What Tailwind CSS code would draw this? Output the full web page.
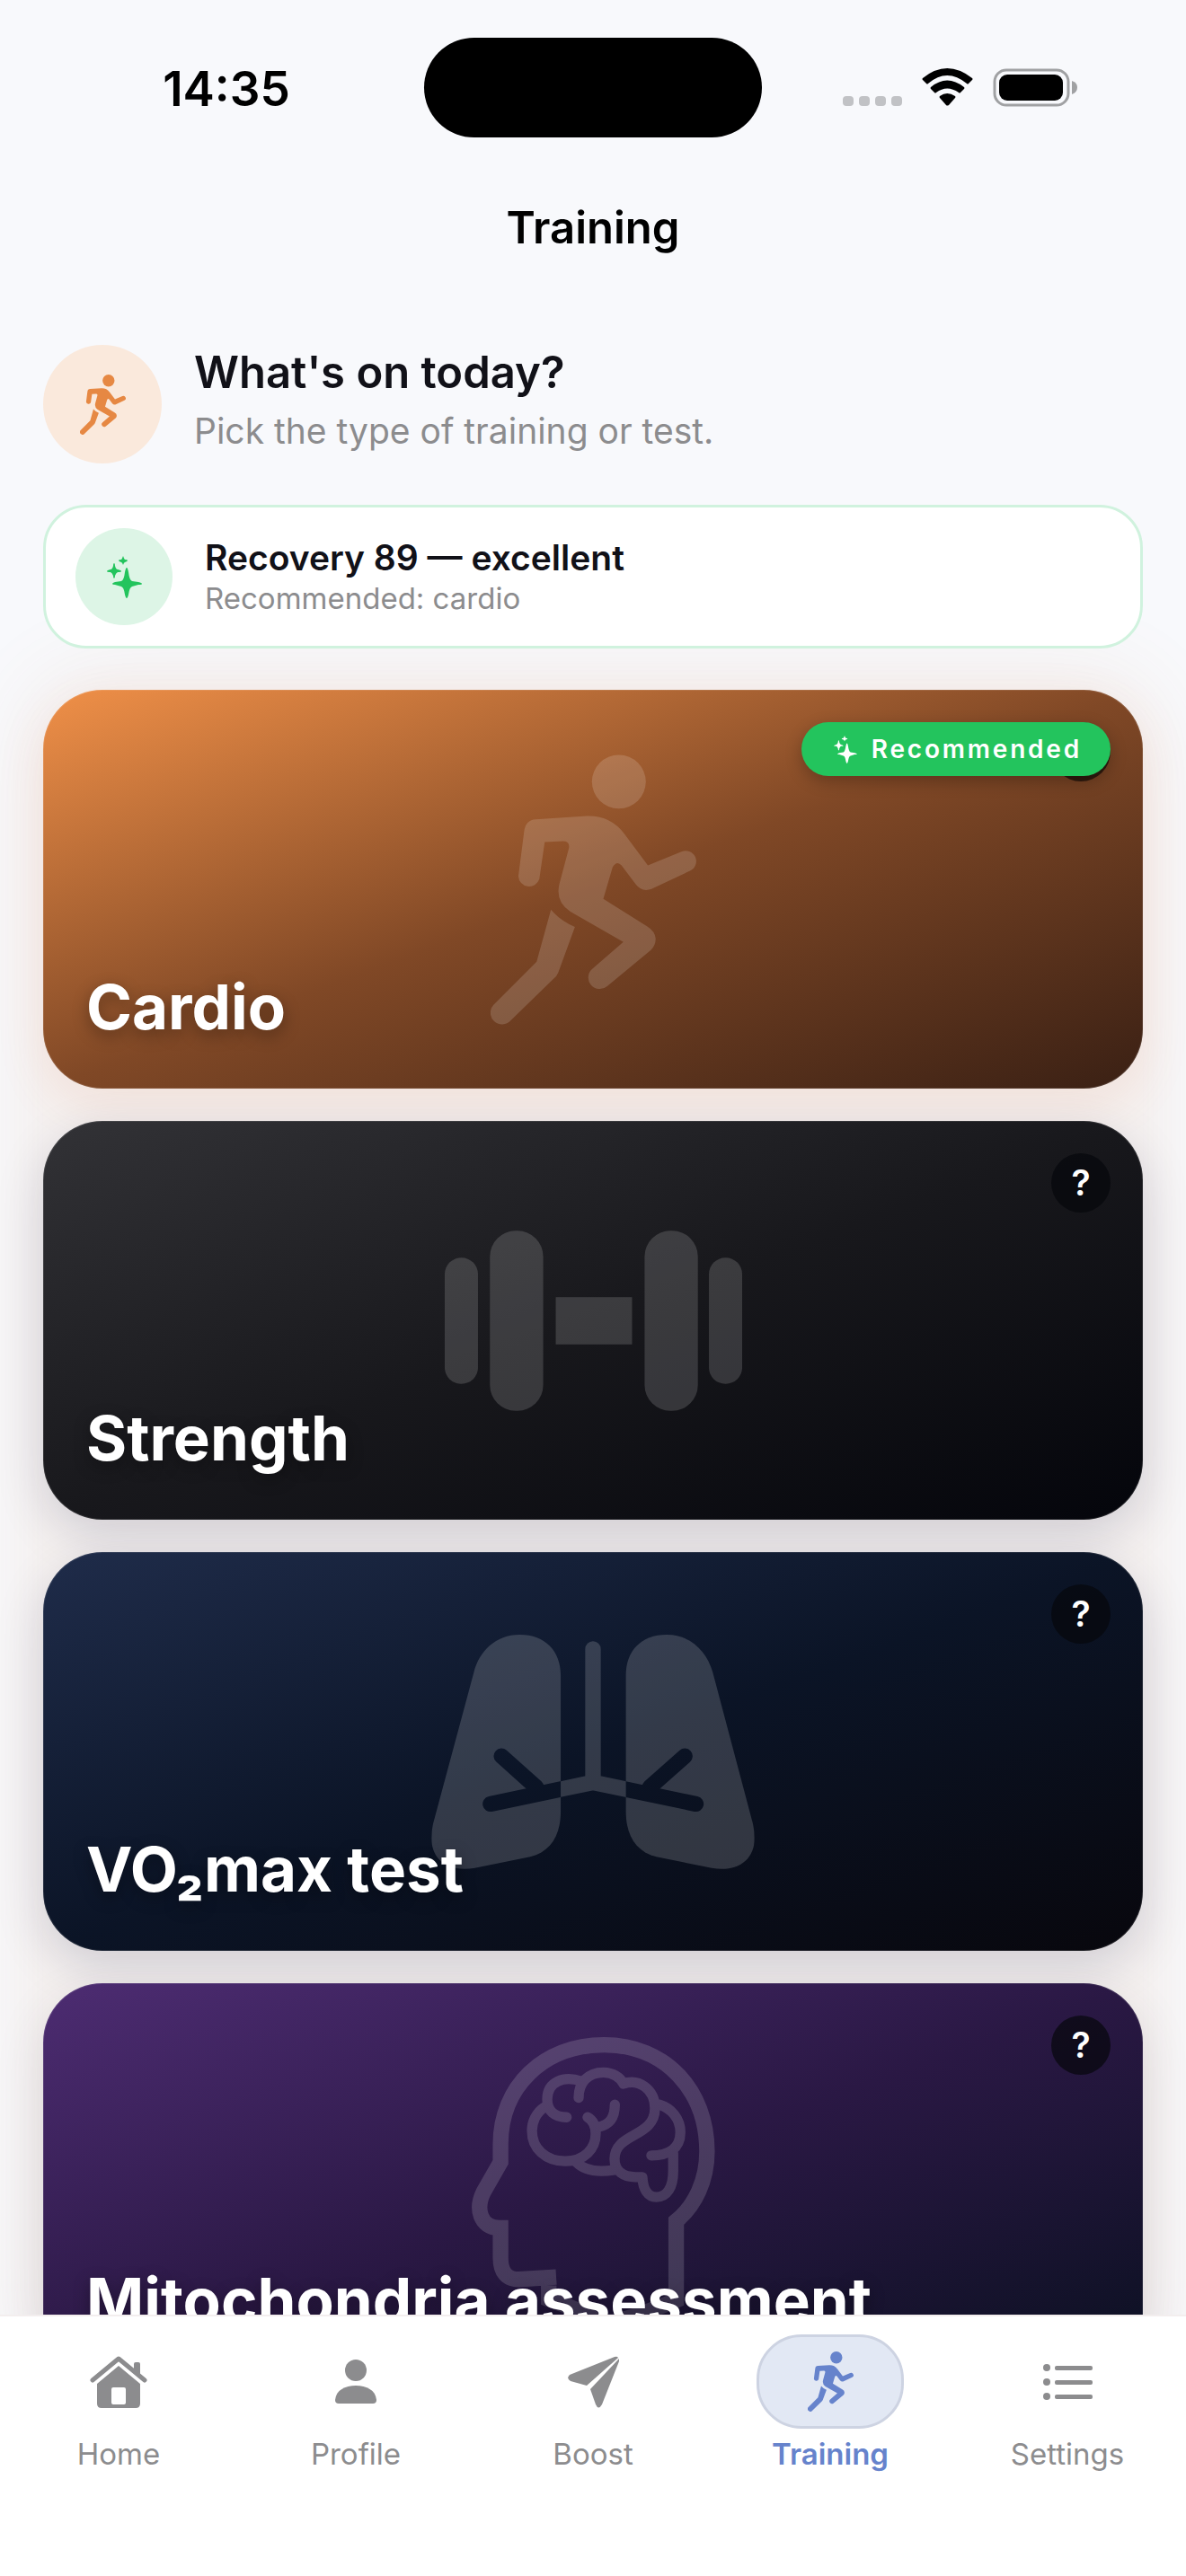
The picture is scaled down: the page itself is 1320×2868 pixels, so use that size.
<!DOCTYPE html>
<html lang="en">
<head>
    <meta charset="UTF-8">
    <meta name="viewport" content="width=device-width, initial-scale=1.0">
    <title>Training</title>
    <script src="https://cdn.jsdelivr.net/npm/@tailwindcss/browser@4"></script>
</head>
<body class="flex h-screen flex-col overflow-hidden bg-[#f8f9fc] font-['Inter','Liberation_Sans',sans-serif] text-[#111118]">

    <!-- Shared icons -->
    <svg class="hidden">
        <symbol id="runner" viewBox="198 116 688 902">
            <circle cx="627" cy="206" r="90"/>
            <path d="M350 332Q314 334 310 374L291 522A36 36 0 0 0 361 532L379 408L440 405Q464 405 460 428L428 548Q414 607 464 640L642 742L538 832A36 36 0 0 0 588 890L734 769Q750 754 750 731Q748 706 722 690L575 598L606 492Q620 468 636 486L684 550Q704 576 736 565L865 504A35 35 0 0 0 836 440L724 486L645 380Q598 318 520 321Z"/>
            <path d="M400 634Q430 670 480 692L424 845Q419 857 410 864L265 1005A38 38 0 0 1 208 952L352 808Z"/>
        </symbol>
        <symbol id="sparkles" viewBox="0 0 39 47">
            <path d="M22 13Q23 13 24 18Q25 27 28 28L35 29Q39 30 39 31Q39 32 35 32L28 34Q25 35 24 43Q23 47 22 47Q21 47 20 43Q19 35 16 34L9 32Q6 32 6 31Q6 30 9 29L16 28Q19 27 20 18Q21 13 22 13Z"/>
            <path d="M8 8Q9 8 9 11Q10 15 12 15Q16 16 16 17Q16 18 12 18Q10 19 9 22Q9 25 8 25Q7 25 7 22Q6 19 4 18Q0 18 0 17Q0 16 4 15Q6 15 7 11Q7 8 8 8Z"/>
            <path d="M18 0Q19 3 20 4Q23 4 23 5Q23 6 20 7Q19 7 18 10Q17 7 16 7Q13 6 13 5Q13 4 16 4Q17 3 18 0Z"/>
        </symbol>
    </svg>

    <!-- Status bar -->
    <header class="shrink-0 text-black">
        <div class="grid h-[194px] grid-cols-3 items-center">
            <div class="pt-1 pl-16 text-center text-[53px] leading-none font-semibold">14:35</div>
            <div class="mx-auto h-[111px] w-[376px] rounded-full bg-black"></div>
            <div class="flex items-center justify-end gap-[22px] pr-[121px]">
                <svg class="h-[42px] w-[66px]" viewBox="0 0 66 42" fill="#c1c2c5">
                    <rect x="0" y="31" width="12" height="11" rx="4"/>
                    <rect x="18" y="31" width="12" height="11" rx="4"/>
                    <rect x="36" y="31" width="12" height="11" rx="4"/>
                    <rect x="54" y="31" width="12" height="11" rx="4"/>
                </svg>
                <svg class="h-[42px] w-[57px]" viewBox="0 0 57 42">
                    <path d="M1 11Q0 12 1 13L5 17Q6 18 7 17Q28 -1 50 17Q51 18 52 17L56 13Q57 12 56 11Q28 -11 1 11Z"/>
                    <path d="M10 21Q9 22 10 23L14 27Q15 28 16 27Q28 18 41 27Q42 28 43 27L47 23Q48 22 47 21Q28 6 10 21Z"/>
                    <path d="M20 31Q19 32 20 33L27 41Q28 42 30 41L37 33Q38 32 37 31Q28 25 20 31Z"/>
                </svg>
                <svg class="h-[43px] w-[94px]" viewBox="0 0 94 43">
                    <rect x="2" y="2" width="82" height="39" rx="13" fill="none" stroke="#a0a1a3" stroke-width="3"/>
                    <rect x="7" y="7" width="71" height="29" rx="9"/>
                    <path d="M88 14Q94 16 94 21Q94 27 88 29Z" fill="#a0a1a3"/>
                </svg>
            </div>
        </div>
        <h1 class="pt-[30px] text-center text-[49px] leading-[60px] font-semibold">Training</h1>
    </header>

    <main class="flex min-h-0 flex-1 flex-col gap-[46px] overflow-hidden px-12 pt-[100px]">
        <!-- Intro -->
        <section class="flex shrink-0 items-center gap-9">
            <div class="grid size-[132px] place-items-center rounded-full bg-[#fae9dc]">
                <svg class="h-[67px] w-[51px] fill-[#e68843]"><use href="#runner"/></svg>
            </div>
            <div class="-mt-1">
                <h2 class="text-[49px] leading-[64px] font-semibold">What's on today?</h2>
                <p class="text-[39px] leading-[66px] text-[#8c8c8e]">Pick the type of training or test.</p>
            </div>
        </section>

        <!-- Recovery -->
        <section class="relative z-10 flex h-[160px] shrink-0 items-center gap-9 rounded-[48px] border-3 border-[#d0f2de] bg-white px-[33px]">
            <div class="grid size-[108px] place-items-center rounded-full bg-[#ddf5e6]">
                <svg class="h-[47px] w-[39px] fill-[#23c45d]"><use href="#sparkles"/></svg>
            </div>
            <div>
                <h2 class="text-[39px] leading-[48px] font-semibold">Recovery 89 — excellent</h2>
                <p class="text-[33px] leading-[42px] text-[#8c8c8e]">Recommended: cardio</p>
            </div>
        </section>

        <!-- Training cards -->
        <section class="flex shrink-0 flex-col gap-9 rounded-[66px] bg-[#f5f1f0] shadow-[0_0_90px_24px_rgba(200,120,70,0.09)]">
            <article class="relative flex h-[444px] shrink-0 items-end rounded-[66px] bg-linear-to-br/srgb from-[#f09048] via-[#804826] to-[#3a2014] px-12 pb-12 inset-ring inset-ring-white/10 shadow-[0_18px_54px_rgba(220,110,60,0.12)]">
                <svg class="absolute inset-0 m-auto h-[301px] w-[229px] fill-white opacity-15"><use href="#runner"/></svg>
                <button class="absolute top-9 right-9 size-[66px] rounded-full bg-black/60" aria-label="About cardio"></button>
                <span class="absolute top-9 right-9 flex h-[60px] items-center gap-4 rounded-full bg-[#23c45d] pr-8 pl-9 text-[28px] font-semibold tracking-widest text-white shadow-[0_6px_18px_rgba(0,0,0,0.25)]">
                    <svg class="h-[31px] w-[26px] fill-white"><use href="#sparkles"/></svg>
                    Recommended
                </span>
                <h2 class="relative text-[69px] leading-[86px] font-bold text-white text-shadow-[0_6px_18px_rgba(0,0,0,0.35)]">Cardio</h2>
            </article>

            <article class="relative flex h-[444px] shrink-0 items-end rounded-[66px] bg-linear-to-br/srgb from-[#323236] via-[#18181c] to-[#04050b] px-12 pb-12 inset-ring inset-ring-white/10 shadow-[0_18px_54px_rgba(20,20,60,0.16)]">
                <svg class="absolute inset-0 m-auto h-[201px] w-[331px] fill-white opacity-15" viewBox="102 121 994 602">
                    <rect x="102" y="211" width="111" height="422" rx="55"/>
                    <rect x="253" y="121" width="178" height="602" rx="86"/>
                    <rect x="473" y="343" width="255" height="158"/>
                    <rect x="770" y="121" width="178" height="602" rx="86"/>
                    <rect x="985" y="211" width="111" height="422" rx="55"/>
                </svg>
                <button class="absolute top-9 right-9 size-[66px] rounded-full bg-[#06070c]/70 text-[39px] font-semibold text-white" aria-label="About strength">?</button>
                <h2 class="relative text-[69px] leading-[86px] font-bold text-white text-shadow-[0_6px_18px_rgba(0,0,0,0.35)]">Strength</h2>
            </article>

            <article class="relative flex h-[444px] shrink-0 items-end rounded-[66px] bg-linear-to-br/srgb from-[#1f2c4a] via-[#0b1426] to-[#08070d] px-12 pb-12 inset-ring inset-ring-white/10 shadow-[0_18px_54px_rgba(20,20,60,0.16)]">
                <svg class="absolute inset-0 m-auto h-[261px] w-[360px] opacity-16" viewBox="120 110 1080 784">
                    <defs>
                        <mask id="airways">
                            <rect x="120" y="110" width="1080" height="784" fill="white"/>
                            <path d="M317 676L660 604L1004 676M354 516L470 620M967 516L850 620" fill="none" stroke="black" stroke-width="52" stroke-linecap="round"/>
                        </mask>
                        <clipPath id="between-lungs"><rect x="552" y="110" width="218" height="784"/></clipPath>
                    </defs>
                    <g mask="url(#airways)" fill="white">
                        <path d="M415 110C500 110 552 165 552 245V700C552 780 520 835 450 853L265 890C180 905 120 865 120 790Q120 765 126 740L262 235C280 165 335 110 415 110Z"/>
                        <path d="M907 110C820 110 770 165 770 245V700C770 780 802 835 872 853L1057 890C1140 905 1200 865 1200 790Q1200 765 1194 740L1060 235C1040 165 985 110 907 110Z"/>
                    </g>
                    <path d="M660 158V600M317 676L660 604L1004 676" clip-path="url(#between-lungs)" fill="none" stroke="white" stroke-width="52" stroke-linecap="round"/>
                </svg>
                <button class="absolute top-9 right-9 size-[66px] rounded-full bg-[#06070c]/70 text-[39px] font-semibold text-white" aria-label="About VO₂max test">?</button>
                <h2 class="relative text-[69px] leading-[86px] font-bold text-white text-shadow-[0_6px_18px_rgba(0,0,0,0.35)]">VO₂max test</h2>
            </article>

            <article class="relative flex h-[444px] shrink-0 items-end rounded-[66px] bg-linear-to-br/srgb from-[#4d2c72] via-[#2a1844] to-[#0a1020] px-12 pb-12 inset-ring inset-ring-white/10 shadow-[0_18px_54px_rgba(60,40,60,0.14)]">
                <svg class="absolute inset-0 m-auto h-[325px] w-[271px] fill-none stroke-white opacity-15" viewBox="133 82 813 976">
                    <path stroke-width="52" d="M390 912V958L590 1034Q640 1034 816 962V697C880 645 919 560 919 465C919 260 780 108 575 108C370 108 229 250 229 440V500L172 600C145 655 160 720 225 720H229V820Q229 892 290 892L415 884"/>
                    <g stroke-width="34" stroke-linecap="round" stroke-linejoin="round">
                        <path d="M378 315C345 335 334 370 334 395C334 455 380 497 445 497C510 497 547 455 547 405C547 380 538 360 520 350"/>
                        <path d="M500 230C440 210 385 230 385 290C385 330 410 350 450 350"/>
                        <path d="M490 285C490 235 520 200 573 200C605 200 630 218 640 238C690 220 745 255 745 320C745 420 610 400 610 490C610 530 640 550 680 550H703C705 590 720 617 750 617C785 617 806 585 806 530V470"/>
                        <path d="M760 308C800 320 830 355 830 400C830 455 790 478 733 478"/>
                        <path d="M611 308C611 350 595 375 555 383"/>
                        <path d="M482 500C510 530 555 535 610 526"/>
                    </g>
                </svg>
                <button class="absolute top-9 right-9 size-[66px] rounded-full bg-[#06070c]/70 text-[39px] font-semibold text-white" aria-label="About mitochondria assessment">?</button>
                <h2 class="relative text-[69px] leading-[86px] font-bold text-white text-shadow-[0_6px_18px_rgba(0,0,0,0.35)]">Mitochondria assessment</h2>
            </article>
        </section>
    </main>

    <!-- Tab bar -->
    <nav class="relative z-20 grid h-[291px] shrink-0 grid-cols-5 items-start border-t-2 border-[#f3eeee] bg-white pt-5 text-[33px] leading-[40px] text-[#8c8c8e]">
        <a href="#home" class="flex flex-col items-center gap-2">
            <span class="grid h-[105px] place-items-center">
                <svg class="h-[58px] w-[64px] fill-current" viewBox="0 0 64 58">
                    <path fill-rule="evenodd" d="M32 11L56 31V53Q56 58 51 58H13Q8 58 8 53V31ZM26 35Q24 35 24 37V52Q24 54 26 54H38Q40 54 40 52V37Q40 35 38 35Z"/>
                    <path d="M3 27L32 3L61 27" fill="none" stroke="white" stroke-width="10"/>
                    <path d="M3 27L32 3L61 27" fill="none" stroke="currentColor" stroke-width="5" stroke-linecap="round" stroke-linejoin="round"/>
                    <path d="M49 16V9Q49 7 51 7H54Q56 7 56 9V22Z"/>
                </svg>
            </span>
            Home
        </a>
        <a href="#profile" class="flex flex-col items-center gap-2">
            <span class="grid h-[105px] place-items-center">
                <svg class="h-[49px] w-[46px] fill-current" viewBox="0 0 46 49">
                    <circle cx="23" cy="12" r="12"/>
                    <path d="M0 45C1 34 11 29 23 29S45 34 46 45Q46 49 42 49H4Q0 49 0 45Z"/>
                </svg>
            </span>
            Profile
        </a>
        <a href="#boost" class="flex flex-col items-center gap-2">
            <span class="grid h-[105px] place-items-center">
                <svg class="h-[58px] w-[57px] fill-current" viewBox="0 0 57 58">
                    <path d="M52 1Q55 0 56 2L21 33L3 28Q-2 25 2 21Z"/>
                    <path d="M57 3Q57 5 57 6L38 54Q34 61 31 54L25 37Z"/>
                </svg>
            </span>
            Boost
        </a>
        <a href="#training" class="flex flex-col items-center gap-2 font-semibold text-[#6683cc]" aria-current="page">
            <span class="grid h-[105px] w-[164px] place-items-center rounded-[50px] border-3 border-[#cdd3e2] bg-[#e2e8f4]">
                <svg class="h-[67px] w-[51px] fill-current"><use href="#runner"/></svg>
            </span>
            Training
        </a>
        <a href="#settings" class="flex flex-col items-center gap-2">
            <span class="grid h-[105px] place-items-center">
                <svg class="h-[40px] w-[55px] fill-current" viewBox="0 0 55 40">
                    <circle cx="4" cy="4" r="4"/>
                    <circle cx="4" cy="20" r="4"/>
                    <circle cx="4" cy="36" r="4"/>
                    <rect x="13" y="2" width="42" height="5" rx="2"/>
                    <rect x="13" y="18" width="42" height="5" rx="2"/>
                    <rect x="13" y="34" width="42" height="5" rx="2"/>
                </svg>
            </span>
            Settings
        </a>
    </nav>
</body>
</html>
